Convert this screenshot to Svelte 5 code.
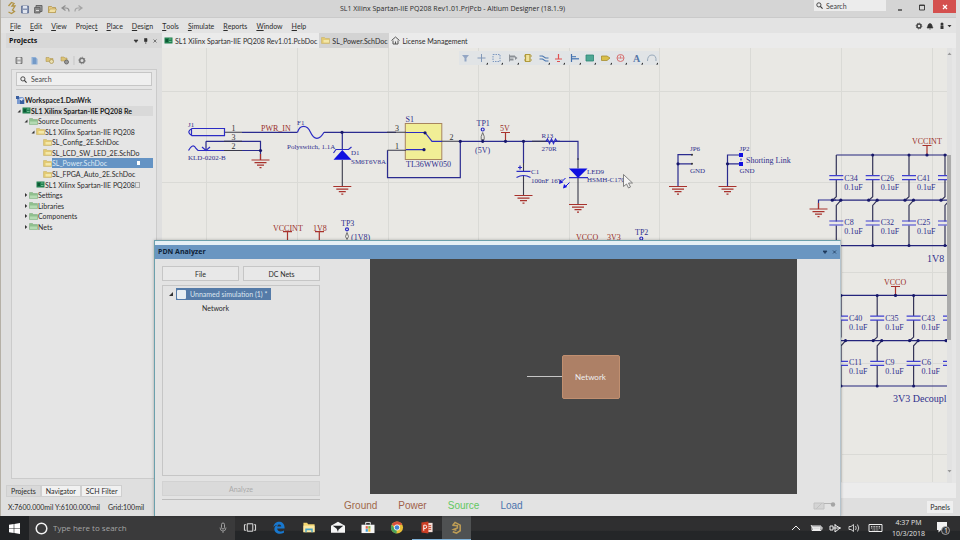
<script>
  const menus = ['File', 'Edit', 'View', 'Project', 'Place', 'Design', 'Tools', 'Simulate', 'Reports', 'Window', 'Help'];
  const accel = { Project: 6 };

  const tree = [
    { text: 'Workspace1.DsnWrk', level: 0, icon: 'workspace', bold: true },
    { text: 'SL1 Xilinx Spartan-IIE PQ208 Re', level: 1, icon: 'board', bold: true, arrow: 'open', shade: true },
    { text: 'Source Documents', level: 2, icon: 'folder', arrow: 'open' },
    { text: 'SL1 Xilinx Spartan-IIE PQ208', level: 3, icon: 'sheet', arrow: 'open', boxed: true },
    { text: 'SL_Config_2E.SchDoc', level: 4, icon: 'sheet' },
    { text: 'SL_LCD_SW_LED_2E.SchDo', level: 4, icon: 'sheet' },
    { text: 'SL_Power.SchDoc', level: 4, icon: 'sheet', selected: true, page: true },
    { text: 'SL_FPGA_Auto_2E.SchDoc', level: 4, icon: 'sheet' },
    { text: 'SL1 Xilinx Spartan-IIE PQ208', level: 3, icon: 'board', page: true },
    { text: 'Settings', level: 2, icon: 'folder', arrow: 'closed' },
    { text: 'Libraries', level: 2, icon: 'folder', arrow: 'closed' },
    { text: 'Components', level: 2, icon: 'folder', arrow: 'closed' },
    { text: 'Nets', level: 2, icon: 'folder', arrow: 'closed' }
  ];

  const gridX = [206, 297, 388, 478, 569, 659, 750, 841, 932];
  const gridY = [91, 182, 272, 363, 454];

  const grounds = [[260.5, 160], [342.3, 186.5], [523.5, 195.5], [578, 204.5], [678, 186.5], [727.5, 186.5], [818.5, 209]];
  const dots = [[260.5, 150.5], [342, 132.3], [425, 132.8], [424, 149.7], [460.3, 141.3], [482.7, 141.3], [505.5, 141.3], [523.5, 141.3], [678, 163.8], [727.5, 163.8]];

  const banks = [
    { top: 155, columns: [[836.3, 'C34', 'C8'], [872.7, 'C26', 'C32'], [909, 'C41', 'C25'], [945, '', '']] },
    { top: 295.4, columns: [[841, 'C40', 'C11'], [877.2, 'C35', 'C9'], [913.6, 'C43', 'C6'], [950, '', '']] }
  ];

  const labels = [
    [188, 127, 'J1', 7], [188, 159.5, 'KLD-0202-B', 7], [297, 125, 'F1', 7], [287, 149, 'Polyswitch, 1.1A', 7],
    [351, 155, 'D1', 7], [351, 164, 'SM6T6V8A', 7], [405.5, 121.5, 'S1', 8], [406, 167, 'TL36WW050', 8],
    [476.5, 126, 'TP1', 8], [475, 152.5, '(5V)', 8], [531, 174, 'C1', 7], [531, 183, '100nF 16V', 7],
    [541.5, 138, 'R13', 7], [541.5, 151, '270R', 7], [587, 174, 'LED9', 7], [587, 182, 'HSMH-C170', 7],
    [690, 151, 'JP6', 7], [690, 172.5, 'GND', 7], [739.5, 151, 'JP2', 7], [739.5, 172.5, 'GND', 7],
    [746, 162.5, 'Shorting Link', 8], [341, 226, 'TP3', 8], [351, 239.5, '(1V8)', 8], [635, 235, 'TP2', 8],
    [927, 262, '1V8', 10], [893, 402, '3V3 Decoupl', 10]
  ];
  const powerLabels = [
    [261, 131, 'PWR_IN'], [500, 131, '5V'], [273, 230.5, 'VCCINT'], [313, 230.5, '1V8'], [576, 239.5, 'VCCO'],
    [607, 239.5, '3V3'], [912, 144, 'VCCINT'], [884, 285, 'VCCO']
  ];
  const pinNumbers = [[231.5, 130.5, '1'], [231.5, 139.5, '3'], [231.5, 149, '2'], [395, 130.5, '3'], [395, 149, '1'], [449.5, 139.5, '2']];

  const tools = ['filter', 'cross', 'select', 'align', 'part', 'wire', 'power', 'bus', 'sheet', 'port', 'error', 'text', 'arc'];
  const legend = [['Ground', '#a0694a'], ['Power', '#a0604a'], ['Source', '#62c862'], ['Load', '#4d74ad']];
</script>

{#snippet docIcon(kind)}
  <svg class="ico" viewBox="0 0 9 9" width="9" height="9" aria-hidden="true">
    {#if kind === 'board'}
      <rect x="0.5" y="1.5" width="8" height="6" fill="#21804f" />
      <rect x="1.5" y="3" width="2.5" height="3" fill="#0d5935" /><path d="M5 3h2.5M5 5.5h2.5" stroke="#7fc79e" stroke-width=".8" />
    {:else if kind === 'sheet'}
      <path d="M.5 1.5h3l1 1h4v5h-8z" fill="#e3ca72" stroke="#c4ad5c" stroke-width=".5" />
      <rect x="2.5" y="4" width="5.5" height="2.5" fill="#f3e7a9" />
    {:else if kind === 'folder'}
      <path d="M.5 1.5h3l1 1h4v5h-8z" fill="#8fc08e" stroke="#78a878" stroke-width=".5" />
      <path d="M1 4.5h7v2.7H1z" fill="#b4dab2" />
    {:else if kind === 'workspace'}
      <path d="M1 1h6l1.500 2v5H1z" fill="#7c9bd0" /><path d="M0 0h3v3H0zM4 4h4v4H4z" fill="#3a5f9f" /><path d="M3 3l4-1-1 3z" fill="#e6eefb" />
    {:else}
      <path d="M.5 4.500L4.500 1l4 3.500M2 4.500V8h5V4.500" fill="none" stroke="#555" stroke-width="1" /><path d="M4 5.500h1V8H4z" fill="#555" />
    {/if}
  </svg>
{/snippet}

{#snippet lens()}
  <svg class="ico" viewBox="0 0 8 8" width="7" height="7" aria-hidden="true">
    <circle cx="3.300" cy="3.300" r="2.400" fill="none" stroke="#333" stroke-width="1" /><path d="M5 5l2.500 2.500" stroke="#333" stroke-width="1.300" />
  </svg>
{/snippet}

<div class="screen">
  <div class="app">
    <header class="titlebar">
      <svg class="quick" viewBox="0 0 78 14" width="78" height="14" aria-hidden="true">
        <path d="M1.500 5l3-3.500 2.500 1-2 2.500h3L5.500 9l2 1.500-3 2-3-1.500" fill="none" stroke="#b19345" stroke-width="1.300" />
        <path d="M14.500 5h7v7h-7z" fill="#8795b3" stroke="#596b92" stroke-width=".8" /><path d="M16 5h4v2.500h-4zM16 9h4v3h-4z" fill="#dfe4ee" />
        <path d="M29 4.500h6v6h-6z" fill="#999" stroke="#666" /><path d="M27.500 6.500h5.500v5.500h-5.500z" fill="#888" stroke="#5d5d5d" stroke-width=".8" /><path d="M29 9.500h3" stroke="#ddd" />
        <path d="M41.500 5.500h3l1 1h3v5h-7z" fill="#e5c982" stroke="#a98c42" stroke-width=".7" /><path d="M43 8h6.500l-1.500 3.500h-6.500z" fill="#f1dfa3" stroke="#a98c42" stroke-width=".5" />
        <path d="M58.500 4.500L55 7l3.500 2.500M55.500 7h3.500q3 0 3 3.500" fill="none" stroke="#909090" stroke-width="1.200" />
        <path d="M71.500 4.500L75 7l-3.500 2.500M74.500 7H71q-3 0-3 3.500" fill="none" stroke="#a5a5a5" stroke-width="1.200" />
      </svg>
      <h1>SL1 Xilinx Spartan-IIE PQ208 Rev1.01.PrjPcb - Altium Designer (18.1.9)</h1>
      <div class="winctl">
        <label class="topsearch">{@render lens()}<input type="text" placeholder="Search" aria-label="Search commands" /></label>
        <button aria-label="Minimize"><svg viewBox="0 0 8 8" width="8" height="8"><path d="M2 7h4" stroke="#333" stroke-width="1.300" /></svg></button>
        <button aria-label="Maximize"><svg viewBox="0 0 8 8" width="8" height="8"><path d="M1.500 2h5v5h-5zM1.500 2.500h5" fill="none" stroke="#333" stroke-width=".9" /></svg></button>
        <button class="close" aria-label="Close"><svg viewBox="0 0 8 8" width="8" height="8"><path d="M2 2l4 4M6 2l-4 4" stroke="#fff" stroke-width="1.200" /></svg></button>
      </div>
    </header>

    <nav class="menubar">
      {#each menus as m}
        {@const k = accel[m] ?? 0}
        <button>{m.slice(0, k)}<u>{m[k]}</u>{m.slice(k + 1)}</button>
      {/each}
      <svg class="sysicons" viewBox="0 0 38 10" width="38" height="10" aria-hidden="true">
        <circle cx="5" cy="5" r="2" fill="none" stroke="#444" stroke-width="1.500" /><circle cx="5" cy="5" r="2.900" fill="none" stroke="#444" stroke-width=".8" stroke-dasharray="1 1.200" />
        <path d="M13 7c1-1 .7-4.500 3-4.500S18 6 19 7zM15.200 8h1.600" fill="#333" stroke="#333" stroke-width=".6" />
        <path d="M26.500 4.500h3V8h-3z" fill="#333" /><circle cx="28" cy="3" r="1.500" fill="#333" /><path d="M33.500 4h4l-2 2.300z" fill="#333" />
      </svg>
    </nav>

    <div class="work">
      <aside class="projects">
        <div class="panelhead"><h2>Projects</h2>
          <svg viewBox="0 0 24 8" width="24" height="8" aria-hidden="true"><path d="M1 3h4L3 5.500zM11.500 1.500h2.500v3h-2.500zM12.800 4.500v2.500M20.500 2.500l3 3M23.500 2.500l-3 3" fill="#333" stroke="#333" stroke-width=".6" /></svg>
        </div>
        <svg class="paneltools" viewBox="0 0 74 9" width="74" height="9" aria-hidden="true">
          <path d="M1 1.500h6v6H1z" fill="#aaa" stroke="#666" stroke-width=".8" /><path d="M2.500 1.500h3v2h-3zM2.500 5.500h3v2h-3z" fill="#eee" />
          <path d="M16.500 1h4l2 2v5.500h-6z" fill="#8fafd6" /><path d="M18 3h3M18 5h3M18 7h3" stroke="#4372ad" stroke-width=".7" />
          <path d="M31 1.500h3l1 1h3v3h-7z" fill="#dbc377" stroke="#a88f48" stroke-width=".5" /><circle cx="36.500" cy="5.500" r="2" fill="#e9dfb3" stroke="#a88f48" stroke-width=".7" />
          <path d="M46 1h3l1 1h2v3h-6z" fill="#dbc377" stroke="#a88f48" stroke-width=".5" /><circle cx="51.500" cy="6" r="2" fill="#999" stroke="#666" stroke-width=".9" />
          <path d="M59 0v9" stroke="#bbb" stroke-width=".7" />
          <circle cx="67" cy="4.500" r="2.300" fill="none" stroke="#777" stroke-width="1.500" /><circle cx="67" cy="4.500" r="3.300" fill="none" stroke="#777" stroke-width=".8" stroke-dasharray="1.200 1.300" />
        </svg>
        <div class="treebox">
          <label class="treesearch">{@render lens()}<input type="text" placeholder="Search" aria-label="Search projects" /></label>
          <hr />
          <ul>
            {#each tree as row}
              <li class={['l' + row.level, row.bold && 'bold', row.shade && 'shade']}>
                {#if row.level > 0}
                  <svg class="arrow" viewBox="0 0 6 6" width="6" height="6" aria-hidden="true">
                    {#if row.arrow === 'open'}<path d="M4.500 1.500v3h-3z" fill="#333" />{:else if row.arrow}<path d="M2 1l2.200 2L2 5z" fill="#333" />{/if}
                  </svg>
                {/if}
                {@render docIcon(row.icon)}
                <button class:selected={row.selected} class:boxed={row.boxed}>
                  <span>{row.text}</span>
                  {#if row.page}<i class="page" class:filled={row.selected}></i>{/if}
                </button>
              </li>
            {/each}
          </ul>
        </div>
        <div class="paneltabs"><button class="on">Projects</button><button>Navigator</button><button>SCH Filter</button></div>
      </aside>

      <main class="editor">
        <div class="doctabs">
          <button>{@render docIcon('board')}SL1 Xilinx Spartan-IIE PQ208 Rev1.01.PcbDoc</button>
          <button class="on">{@render docIcon('sheet')}SL_Power.SchDoc</button>
          <button>{@render docIcon('home')}License Management</button>
        </div>
        <div class="canvas">
          <svg class="sch" viewBox="162 48 785 434" width="785" height="434" role="img" aria-label="Power schematic">
            <g stroke="#dadad6" stroke-width="1">
              {#each gridX as x}<path d="M{x}.5 48V482" />{/each}
              {#each gridY as y}<path d="M162 {y}.5H947" />{/each}
            </g>
            <rect x="405.3" y="123.500" width="36.500" height="36" fill="#f1ee96" stroke="#a8855e" />
            <g fill="none" stroke="#2b2b8f" stroke-width="1.200">
              <path d="M242 132.300H297.500M324 132.300H396M342.300 132.300V150M206 141.300H260.500V160M206 150.500H242M387.500 150.200V177.700H460.300V141.300H560M206 141.300V150M242 150.500H260.500" />
              <path d="M523.500 141.300V163M557 141.300H578V160M692 154.700H678V186.500M678 163.800H692M741 155H727.500V186.500M727.500 163.800H741M836 200H818.500V209" />
            </g>
            <g fill="none" stroke="#3a3a4a" stroke-width="1.100">
              <path d="M224.500 132.300H242M224 141.300H242M224 150.500H242M342.300 160V186.500M387 132.300H406M387.500 150.200H406M442 141.300H460M523.500 163V171M523.500 176V195.500M532 141.300H546M578 158V168.500M578 178V204.500" />
            </g>
            <g fill="none" stroke="#2c2cc4" stroke-width="1.200">
              <path d="M192 128.500H224.500V135.700H192Q185.500 132 192 128.500ZM191.500 128.500V135.700M188.500 150.500Q193 142.500 196 148.500L198 150.500H224M202 147L206 150.500 210 147" />
              <path d="M297.500 132.300C300 124.500 307 124.500 310.500 132.300S319.500 140.500 324 132.300" />
              <path d="M333.500 153L336 149.500H348.500L351.500 147M406 132.500H425L432 141.300H442M406 149.700H424" />
              <path d="M516.500 171.300H530.500M516.500 177.500Q523.500 173.500 530.500 177.500M518 167.500H522M520 165.500V169.500M546 141.300L547.500 139 549.500 143.500 551.500 139 553.500 143.500 555.500 139 557 141.300M569 177.700H588" />
              <path d="M741 155V164" stroke-dasharray="2 1.500" />
              <circle cx="482.700" cy="129.500" r="1.500" /><circle cx="347" cy="229.300" r="1.500" /><circle cx="641.300" cy="238.500" r="1.500" />
            </g>
            <path d="M482.700 132.500l-1.500 4v3h3v-3zM347 232.500l-1.500 4 1.500 3 1.500-3z" fill="none" stroke="#555" stroke-width=".8" />
            <g fill="#1010e0">
              <path d="M333.500 159.700H351.500L342.300 150ZM569 168.500H587.500L578 178Z" />
              <path d="M739 153h4v4h-4zM739 162h4v4h-4z" />
              <path d="M559 184l1-4.500 3.200 3zM563 188.500l1-4.500 3.200 3z" />
              <path d="M561 182.500l4.500-4.500M565 187l4.500-4.500" stroke="#1010e0" stroke-width="1" />
            </g>
            <g fill="none" stroke="#a8322c" stroke-width="1.200">
              {#each grounds as [x, y]}
                <path d="M{x - 9} {y}h18M{x - 6} {y + 2.700}h12M{x - 3.500} {y + 5.200}h7M{x - 1} {y + 7.700}h2" />
              {/each}
              <path d="M501 132.500H510M505.500 132.500V141M283 231.700H292M287.500 231.700V241M315 231.700H324M319.300 231.700V241M922.500 145.500H931.500M927 145.500V155M891 286.500H900M895.500 286.500V295M260.500 154V160M818.500 203V209" />
            </g>
            {#each banks as { top, columns }, b}
              <g fill="none" stroke="#24247c" stroke-width="1.200">
                <path d="M{columns[0][0]} {top}H947M{columns[0][0] - 5} {top + 45.200}H947M{columns[0][0]} {top + 90.600}H947" />
              </g>
              {#each columns as [x, upper, lower], i}
                <path d="M{x} {top}v20.700m0 4v17l-4 3.700m8.500 0l-4.500 5v16m0 4v20" fill="none" stroke="#343458" stroke-width="1.200" />
                <path d="M{x - 7} {top + 20.700}h14m-14 4h14M{x - 7} {top + 66}h14m-14 4h14" fill="none" stroke="#3f3fd0" stroke-width="1.200" />
                <g fill="#17176a">
                  <circle cx={x - 4} cy={top + 45.200} r="1.600" /><circle cx={x + 4.500} cy={top + 45.200} r="1.600" />
                  {#if i > 0 || b > 0}<circle cx={x} cy={top} r="1.500" /><circle cx={x} cy={top + 90.600} r="1.500" />{/if}
                </g>
                {#if upper}
                  <g class="lbl" font-size="8">
                    <text x={x + 8} y={top + 25.500}>{upper}</text><text x={x + 8} y={top + 34.500}>0.1uF</text>
                    <text x={x + 8} y={top + 70}>{lower}</text><text x={x + 8} y={top + 78.500}>0.1uF</text>
                  </g>
                {/if}
              {/each}
            {/each}
            <circle cx="927" cy="155" r="1.600" fill="#17176a" /><circle cx="895.500" cy="295.400" r="1.600" fill="#17176a" />
            {#each dots as [x, y]}<circle cx={x} cy={y} r="1.600" fill="#17176a" />{/each}
            <g fill="#333"><circle cx="692" cy="154.700" r="1" /><circle cx="692" cy="163.800" r="1" /></g>
            {#each labels as [x, y, t, s]}<text class="lbl" {x} {y} font-size={s}>{t}</text>{/each}
            {#each powerLabels as [x, y, t]}<text class="pwr" {x} {y} font-size="8">{t}</text>{/each}
            {#each pinNumbers as [x, y, t]}<text class="pin" {x} {y} font-size="8">{t}</text>{/each}
            <path d="M623.500 174.500v12l3-2.500 2 4 2-1-2-4h4z" fill="#f4f4f4" stroke="#666" stroke-width=".8" />
          </svg>

          <div class="toolbar">
            {#each tools as t}
              <button aria-label={t}>
                <svg viewBox="0 0 14 14" width="14" height="14">
                  {#if t === 'filter'}<path d="M3 4h7L7.500 7v3.500h-2V7z" fill="#93a6c4" />
                  {:else if t === 'cross'}<path d="M6.500 3v8M2.500 7h8" stroke="#8298b8" stroke-width="1" />
                  {:else if t === 'select'}<path d="M3 3.500h7v7H3z" fill="none" stroke="#7d98c0" stroke-dasharray="1.500 1" />
                  {:else if t === 'align'}<path d="M3.500 3.500v7" stroke="#8b9096" /><path d="M4 4.500h5v2H4zM4 7.500h3.500v2H4zM9 5l2.500 2L9 9z" fill="#8b9096" />
                  {:else if t === 'part'}<path d="M4.500 3.500h4.500v7H4.500z" fill="#f0e29c" stroke="#b09a3c" stroke-width="1.200" /><path d="M3 5h1M3 9h1M9.500 5h1.500M9.500 9h1.500" stroke="#b09a3c" />
                  {:else if t === 'wire'}<path d="M2.500 5h3l3 2h3M2.500 8h3l3 2h3" fill="none" stroke="#4a76b0" stroke-width="1.100" />
                  {:else if t === 'power'}<path d="M6.500 3v5M3 8h7M5 10.500h3" stroke="#e05050" stroke-width="1.200" />
                  {:else if t === 'bus'}<path d="M3.500 3v8" stroke="#4470ac" stroke-width="1.200" /><path d="M4 5h4v1.200H4zM4 7h7v1.500H4z" fill="#5f88bd" />
                  {:else if t === 'sheet'}<path d="M3 4h7.500v6H3z" fill="#4da794" stroke="#2b8574" stroke-width=".8" />
                  {:else if t === 'port'}<path d="M2.500 5h5.500l3 2-3 2.500H2.500z" fill="#d9bf4a" stroke="#a68e32" stroke-width=".8" />
                  {:else if t === 'error'}<circle cx="6.500" cy="7" r="3.500" fill="none" stroke="#d67272" /><path d="M6.500 4.500v3M3 7h7" stroke="#d67272" stroke-width=".8" />
                  {:else if t === 'text'}<text x="3" y="11" font-size="10" font-weight="bold" font-family="Liberation Serif, serif" fill="#5676a6">A</text>
                  {:else}<path d="M2.500 10q0-6 4.500-6t4 6" fill="none" stroke="#9ab" stroke-width="1" />{/if}
                  {#if t !== 'filter' && t !== 'part'}<path d="M13 11.500v2h-2z" fill="#222" />{/if}
                </svg>
              </button>
            {/each}
          </div>
          <div class="vscroll">
            <svg viewBox="0 0 5 5" width="5" height="5" aria-hidden="true"><path d="M.5 4h4l-2-2.500z" fill="#999" /></svg>
            <span></span>
            <svg class="down" viewBox="0 0 5 5" width="5" height="5" aria-hidden="true"><path d="M.5 1h4l-2 2.500z" fill="#999" /></svg>
          </div>
        </div>
      </main>
    </div>

    <footer class="status">
      <span>X:7600.000mil Y:6100.000mil</span><span>Grid:100mil</span>
      <button>Panels</button>
    </footer>

    <section class="pdn" aria-label="PDN Analyzer">
      <div class="pdntitle"><h2>PDN Analyzer</h2>
        <svg viewBox="0 0 16 8" width="16" height="8" aria-hidden="true"><path d="M0 3h4L2 5.500zM10 2.500l3 3M13 2.500l-3 3" fill="#1e3a5c" stroke="#1e3a5c" stroke-width=".8" /></svg>
      </div>
      <div class="pdnbody">
        <div class="pdnleft">
          <div class="pair"><button>File</button><button>DC Nets</button></div>
          <div class="simbox">
            <div class="simrow">
              <svg viewBox="0 0 6 6" width="6" height="6" aria-hidden="true"><path d="M5 1v4H1z" fill="#333" /></svg>
              <label><input type="checkbox" />Unnamed simulation (1) *</label>
            </div>
            <div class="simchild">Network</div>
          </div>
          <button class="analyze" disabled>Analyze</button>
          <hr />
        </div>
        <div class="pdnmain">
          <div class="plot"><span class="lead"></span><button>Network</button></div>
          <div class="legend">
            {#each legend as [name, color]}<span style="color: {color}">{name}</span>{/each}
          </div>
        </div>
        <svg class="toggle" viewBox="0 0 26 10" width="26" height="10" aria-hidden="true"><path d="M2 2h10v6H2zM4 8l6-6" fill="#d4d4d4" stroke="#c2c2c2" /><path d="M12 2.500h8" stroke="#b5b5b5" /><circle cx="21" cy="3.500" r="2.200" fill="#a5a5a5" /></svg>
      </div>
    </section>
  </div>

  <nav class="taskbar">
    <button class="start" aria-label="Start"><svg viewBox="0 0 11 11" width="11" height="11"><path d="M0 1.700l4.700-.7v4.200H0zM5.300.9L11 0v5.200H5.300zM0 5.800h4.700V10L0 9.300zM5.300 5.800H11V11l-5.700-.9z" fill="#fff" /></svg></button>
    <label class="cortana">
      <svg viewBox="0 0 13 13" width="13" height="13"><circle cx="6.500" cy="6.500" r="5.300" fill="none" stroke="#f2f2f2" stroke-width="1.500" /></svg>
      <input type="text" placeholder="Type here to search" aria-label="Type here to search" />
      <svg viewBox="0 0 8 12" width="8" height="12"><rect x="2.500" y="1" width="3" height="6" rx="1.500" fill="none" stroke="#aaa" stroke-width=".9" /><path d="M1 5.500q0 3.500 3 3.500t3-3.500M4 9v2" fill="none" stroke="#aaa" stroke-width=".8" /></svg>
    </label>
    <div class="apps">
      <button aria-label="Task view"><svg viewBox="0 0 14 14"><path d="M4 3h6v8H4zM2.500 4H1v6h1.500M11.500 4H13v6h-1.500" fill="none" stroke="#eee" stroke-width="1" /></svg></button>
      <button aria-label="Edge"><svg viewBox="0 0 14 14"><path d="M1 6.500C2-1.500 13-1 13 7v1.200H5c.3 3.500 4.500 3.700 7.300 2v2.500C7 15 2 13 2 8.500 2 6.300 3.500 4.700 5.500 4 3.500 4.200 2 5 1 6.500zM5.100 6h4.300C9.300 3.200 5.500 3 5.100 6z" fill="#1878cf" /></svg></button>
      <button aria-label="File Explorer"><svg viewBox="0 0 14 14"><path d="M1 2h4l1 1.500h7V12H1z" fill="#f2d46e" /><path d="M1 5h12v7H1z" fill="#fbe9a4" /><path d="M3 8h8v4H9.500v-2h-5v2H3z" fill="#4aa5c8" /></svg></button>
      <button aria-label="Mail"><svg viewBox="0 0 16 14"><path d="M0 5l8-4.500L16 5v8H0z" fill="#f5f5f5" /><path d="M2 5h12L8.500 9.500 8 12 6.500 8.500z" fill="#242628" /></svg></button>
      <button aria-label="Store"><svg viewBox="0 0 14 14"><path d="M0 4h14v9H0z" fill="#f5f5f5" /><path d="M4.500 4V1.500h5V4" fill="none" stroke="#f5f5f5" /><path d="M4.500 5.500h2.300v2.800H4.500z" fill="#e2604b" /><path d="M7.300 5.500h2.300v2.800H7.300z" fill="#7db343" /><path d="M4.500 8.700h2.300v2.800H4.500z" fill="#3c9fd8" /><path d="M7.300 8.700h2.300v2.800H7.300z" fill="#f0b72f" /></svg></button>
      <button aria-label="Chrome"><svg viewBox="0 0 14 14"><circle cx="7" cy="7" r="6.500" fill="#e8bf38" /><path d="M7 7L1.400 3.700A6.500 6.500 0 0 1 12.700 4L7 4z" fill="#d8503f" /><path d="M7 7l-.5 6.500A6.500 6.500 0 0 1 1.400 3.700L4.300 8.500z" fill="#4aa35a" /><circle cx="7" cy="7" r="3.200" fill="#fff" /><circle cx="7" cy="7" r="2.500" fill="#4384d6" /></svg></button>
      <button class="run" aria-label="PowerPoint"><svg viewBox="0 0 14 14"><path d="M7 2h6v10H7z" fill="#f3ded8" /><path d="M8.500 5h3M8.500 7h3M8.500 9h3" stroke="#c6452b" /><path d="M1 1.500l7.500-1v13L1 12.500z" fill="#cc3e25" /><path d="M3.500 10.500v-6h1.500q1.700 0 1.700 1.700T5 8H3.500" fill="none" stroke="#fff" stroke-width="1" /></svg></button>
      <button class="run active" aria-label="Altium Designer"><svg viewBox="0 0 14 14"><path d="M3.500 4.500L6 1.500l5.500 3v6L7.500 13l-4-1.500M3 4.500l5.500.5v2.500L4.500 9l3 1" fill="none" stroke="#bd9c55" stroke-width="1.700" /></svg></button>
    </div>
    <svg class="tray" viewBox="0 0 94 14" width="94" height="14" aria-hidden="true">
      <g fill="none" stroke="#eee" stroke-width="1">
        <path d="M3 9l4-4 4 4M23 5h9v4.500h-9zM33 6v2.500M22 4l2 3" /><path d="M24 6h7v2.500h-7z" fill="#ddd" />
        <path d="M41 5h3v4h-3zM46 3v8M46 4l5 3-5 4M44 7h8" /><path d="M60 5.500h2l2.500-2v7l-2.500-2h-2zM66.500 5q1.500 2 0 4M68.500 3.500q2.500 3.500 0 7" stroke-width=".8" />
        <path d="M80 3.500h13v7H80z" /><path d="M82 5.500h9M82 7h9M83.500 9h6" stroke-dasharray="1 .6" stroke-width=".8" />
      </g>
    </svg>
    <div class="clock"><span>4:37 PM</span><span>10/3/2018</span></div>
    <button class="note" aria-label="Notifications"><svg viewBox="0 0 16 16" width="16" height="16"><path d="M2 2h10v8H6l-2.500 2.500V10H2z" fill="#f2f2f2" /><circle cx="10.500" cy="10.500" r="4" fill="#333537" stroke="#bbb" stroke-width=".8" /><text x="9" y="13" font-size="7" font-family="Open Sans, sans-serif" fill="#fff">1</text></svg></button>
  </nav>
</div>

<style>
  :global(body) { margin: 0; overflow: hidden; }
  .screen { height: 100vh; display: flex; flex-direction: column; font: 7px/10px Lato, 'Open Sans', sans-serif; color: #2b2b2b; background: #dcdcdc; }
  .screen :is(button, input) { font: inherit; color: inherit; border: 0; background: none; padding: 0; margin: 0; }
  .screen svg { flex: none; display: block; }
  .screen :is(button, label) { display: flex; align-items: center; white-space: nowrap; }
  h1, h2, ul, hr { margin: 0; padding: 0; font-size: inherit; }
  h1, h2, .taskbar { font-family: 'Open Sans', 'Noto Sans', sans-serif; }
  input { outline: none; min-width: 0; }
  input::placeholder { color: #444; opacity: 1; }

  .app { position: relative; flex: 1; min-height: 0; display: flex; flex-direction: column; padding-right: 4px; background: #dfdfdf; border-left: 1px solid #b5b0a6; }
  .titlebar { height: 17px; display: grid; grid-template-columns: 339px 1fr auto; align-items: start; background: #d5d5d5; border-bottom: 1px solid #cacaca; }
  .quick { padding: 1px 0 0 6px; }
  .titlebar h1 { font-weight: 400; line-height: 18px; white-space: nowrap; }
  .winctl { display: flex; align-items: flex-start; }
  .topsearch { width: 70px; height: 11px; gap: 3px; padding-left: 2px; background: #ececec; margin-right: 3px; }
  .topsearch input { width: 50px; }
  .winctl button { width: 22px; height: 13px; justify-content: center; }
  .winctl button.close { width: 23px; background: #d4504e; }

  .menubar { height: 15px; display: flex; align-items: center; gap: 9px; padding: 0 4px 0 9px; background: #e3e3e3; }
  .sysicons { margin-left: auto; }

  .work { flex: 1; min-height: 0; display: flex; }
  .projects { width: 156px; flex: none; margin-left: 5px; display: flex; flex-direction: column; }
  .panelhead { height: 15px; display: flex; align-items: center; justify-content: space-between; padding: 0 5px 0 3px; background: #d8d8d8; color: #111; }
  .paneltools { margin: 8px 0 4px 9px; }
  .treebox { flex: 1; min-height: 0; margin: 0 5px 4px 5px; padding: 2px 4px 0 4px; border: 1px solid #cbcbcb; background: #e5e5e5; }
  .treesearch { height: 12px; gap: 4px; padding-left: 3px; border: 1px solid #c6c6c6; background: #efefef; }
  .treebox hr { border: 0; border-top: 1px solid #c8c8c8; margin: 3px 0 5px; }
  ul { list-style: none; height: 137px; display: grid; grid-auto-rows: 1fr; margin-right: -1px; }
  li { display: flex; align-items: center; min-width: 0; }
  li button { flex: 1; min-width: 0; height: 10px; border: 1px solid transparent; }
  li.bold { font-weight: 700; color: #222; }
  li.shade button { background: #d9d9d9; }
  li.l2 { padding-left: 7px; }
  li.l3 { padding-left: 14px; }
  li.l4 { padding-left: 21px; }
  li button.selected { background: #6493c4; color: #dfeaf5; }
  li button.boxed { border-color: #9db4cc; }
  .page { width: 3px; height: 4px; margin-left: auto; margin-right: 13px; border: 1px solid #aaa; }
  .page.filled { background: #fff; border: 0; }
  .paneltabs { height: 15px; display: flex; align-items: center; }
  .paneltabs button { height: 12px; padding: 0 4px; border: 1px solid #cfcfcf; background: #f1f1f1; }
  .paneltabs button.on { background: #d9d9d9; }

  .editor { flex: 1; min-width: 0; display: flex; flex-direction: column; background: #ececec; }
  .doctabs { height: 15px; flex: none; display: flex; background: #ebebeb; }
  .doctabs button { padding: 0 2px; gap: 2px; }
  .doctabs button.on { background: #d3d3d3; }
  .canvas { position: relative; flex: 1; min-height: 0; overflow: hidden; margin-bottom: 15px; background: #e6e6e6; }
  .sch { background: #e9e8e4; font-family: 'Liberation Serif', serif; }
  .lbl { fill: #2f2f8c; }
  .pwr { fill: #9a2f2a; }
  .pin { fill: #333; }
  .toolbar { position: absolute; left: 297px; top: 3px; width: 200px; display: flex; justify-content: space-between; background: #e1e4e6; }
  .vscroll { position: absolute; right: 4px; top: 0; bottom: 0; width: 5px; padding: 3px 0; box-sizing: border-box; background: #e2e2e2; }
  .vscroll span { display: block; height: 185px; margin-top: 99px; width: 4px; background: #ababab; }
  .vscroll .down { margin-top: 129px; }

  .status { height: 18px; display: flex; align-items: center; gap: 8px; padding: 0 3px 0 7px; background: #dfdfdf; }
  .status button { margin-left: auto; height: 12px; padding: 0 3px; background: #efefef; }

  .pdn { position: absolute; left: 153px; right: 119px; top: 240px; bottom: 0; display: flex; flex-direction: column; border: 1px solid #6ba0ac; border-right-color: #b5c3cc; border-bottom: 0; background: #e3e3e3; box-shadow: 0 0 3px #0004; }
  .pdntitle { height: 14px; display: flex; align-items: center; justify-content: space-between; padding: 0 1px 0 3px; border-top: 4px solid #e6f0f6; background: #6a96c1; color: #0e2238; }
  .pdnbody { flex: 1; min-height: 0; display: flex; }
  .pdnleft { width: 158px; flex: none; padding: 7px 0 16px 7px; display: flex; flex-direction: column; }
  .pair { display: grid; grid-template-columns: 1fr 1fr; gap: 4px; }
  .pdnleft button { height: 15px; justify-content: center; border: 1px solid #c6c6c6; background: #e8e8e8; }
  .simbox { flex: 1; margin: 4px 0 5px; border: 1px solid #c6c6c6; }
  .simrow { display: flex; align-items: center; gap: 2px; padding: 2px 0 0 5px; }
  .simrow label { height: 12px; gap: 4px; padding: 0 3px 0 1px; background: #557ba8; color: #dce6f0; }
  .simrow input { appearance: none; width: 9px; height: 9px; background: #e9eef2; border-radius: 1px; }
  .simchild { padding: 3px 0 0 39px; }
  .pdnleft button.analyze { background: #dadada; border-color: #d2d2d2; color: #aaa; }
  .pdnleft hr { border: 0; border-top: 1px solid #bcbcbc; margin-top: 3px; }
  .pdnmain { flex: 1; min-width: 0; margin-left: 50px; display: flex; flex-direction: column; }
  .plot { flex: 1; display: flex; align-items: center; justify-content: center; padding-right: 21px; background: #464646; }
  .lead { width: 35px; height: 1px; background: #c6c6c6; }
  .plot button { width: 58px; height: 44px; justify-content: center; border: 1px solid #c08f70; border-radius: 2px; background: #ad8066; color: #eee; font-size: 8px; }
  .legend { height: 20px; padding-top: 2px; display: flex; align-items: center; gap: 21px; margin-left: -26px; font: 10px/20px 'Liberation Sans', Arial, sans-serif; }
  .toggle { align-self: flex-end; margin: 0 2px 5px 15px; }

  .taskbar { height: 24px; display: flex; align-items: stretch; background: linear-gradient(#2f2f30 60%, #242628 62%); color: #e4e4e4; }
  .taskbar .start { width: 29px; justify-content: center; background: #202224; }
  .cortana { width: 206px; box-sizing: border-box; padding: 0 8px 0 6px; gap: 5px; background: #3a3a3b; }
  .cortana input { flex: 1; font-size: 8px; }
  .cortana input::placeholder { color: #a5a5a5; }
  .apps { width: 236px; display: flex; }
  .apps button { flex: 1; justify-content: center; box-sizing: border-box; border-bottom: 1px solid transparent; }
  .apps svg { width: 14px; height: 13px; }
  .apps button.run { border-bottom-color: #80b4dc; }
  .apps button.active { background: #4f5152; }
  .tray { margin-left: auto; margin-right: 4px; align-self: center; }
  .clock { width: 43px; display: flex; flex-direction: column; align-items: center; justify-content: center; line-height: 11px; }
  .taskbar .note { padding: 0 9px 0 5px; }
</style>
